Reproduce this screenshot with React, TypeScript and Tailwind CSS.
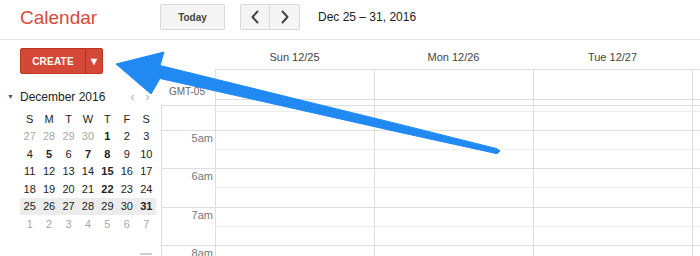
import React from 'react';

type Cell = { d: string; muted?: boolean; bold?: boolean };

const weeks: Cell[][] = [
  [{ d: '27', muted: true }, { d: '28', muted: true }, { d: '29', muted: true }, { d: '30', muted: true }, { d: '1', bold: true }, { d: '2' }, { d: '3' }],
  [{ d: '4' }, { d: '5', bold: true }, { d: '6' }, { d: '7', bold: true }, { d: '8', bold: true }, { d: '9' }, { d: '10' }],
  [{ d: '11' }, { d: '12' }, { d: '13' }, { d: '14' }, { d: '15', bold: true }, { d: '16' }, { d: '17' }],
  [{ d: '18' }, { d: '19' }, { d: '20' }, { d: '21' }, { d: '22', bold: true }, { d: '23' }, { d: '24' }],
  [{ d: '25' }, { d: '26' }, { d: '27' }, { d: '28' }, { d: '29' }, { d: '30' }, { d: '31', bold: true }],
  [{ d: '1', muted: true }, { d: '2', muted: true }, { d: '3', muted: true }, { d: '4', muted: true }, { d: '5', muted: true }, { d: '6', muted: true }, { d: '7', muted: true }],
];

// last column runs off the right edge, its label isn't visible
const dayNames = ['Sun 12/25', 'Mon 12/26', 'Tue 12/27', ''];

// half-hour slots below the grid's top border; hour slots end on a full-width line
const slots: { h: string; hour: boolean; label?: string }[] = [
  { h: 'h-[6px]', hour: false },
  { h: 'h-[19px]', hour: true },
  { h: 'h-[19px]', hour: false, label: '5am' },
  { h: 'h-[19px]', hour: true },
  { h: 'h-[19px]', hour: false, label: '6am' },
  { h: 'h-[20px]', hour: true },
  { h: 'h-[19px]', hour: false, label: '7am' },
  { h: 'h-[19px]', hour: true },
  { h: 'h-[19px]', hour: false, label: '8am' },
];

function Chevron({ dir }: { dir: 'left' | 'right' }) {
  return (
    <svg width="10" height="14" viewBox="0 0 10 14" fill="none">
      <path
        d={dir === 'left' ? 'M7.5 1.5L2.5 7l5 5.5' : 'M2.5 1.5L7.5 7l-5 5.5'}
        stroke="#444"
        strokeWidth="2"
        strokeLinecap="round"
        strokeLinejoin="round"
      />
    </svg>
  );
}

function MiniCalendar() {
  return (
    <div className="mt-[15px]">
      <div className="flex items-center h-[16px]">
        <span className="w-[20px] pl-[7px] text-[7px] text-[#555]">▼</span>
        <span className="text-[12px] text-[#222]">December 2016</span>
        <span className="ml-[25px] text-[12px] text-[#aaa]">‹</span>
        <span className="ml-[11px] text-[12px] text-[#aaa]">›</span>
      </div>
      <div className="ml-[20px] w-[136px] mt-[5px]">
        <div className="grid grid-cols-7 h-[17.5px] items-center text-[11px] text-[#222]">
          {['S', 'M', 'T', 'W', 'T', 'F', 'S'].map((s, i) => (
            <span key={i} className="text-center">{s}</span>
          ))}
        </div>
        {weeks.map((w, i) => (
          <div key={i} className={`grid grid-cols-7 h-[17.5px] items-center text-[11px] ${i === 4 ? 'bg-[#ececec]' : ''}`}>
            {w.map((c, j) => (
              <span
                key={j}
                className={`text-center ${c.muted ? 'text-[#a8a8a8]' : 'text-[#222]'} ${c.bold ? 'font-bold' : ''}`}
              >
                {c.d}
              </span>
            ))}
          </div>
        ))}
      </div>
      <div className="mt-[20px] ml-[140px] w-[12px] h-[2px] bg-[#cfcfcf]" />
    </div>
  );
}

function Arrow() {
  return (
    <svg className="absolute inset-0 pointer-events-none" width="700" height="256" viewBox="0 0 700 256">
      <polygon
        points="116,64 164,52 160,65.5 300,99.9 400,124.4 497,148.7 500,151 497,153.7 400,132.4 300,109.9 160,78.5 151,94"
        fill="#2189f2"
        stroke="#2189f2"
        strokeWidth="1"
        strokeLinejoin="round"
      />
    </svg>
  );
}

export default function App() {
  return (
    <div className="relative w-[700px] h-[256px] overflow-hidden bg-white font-['Liberation_Sans',Arial,sans-serif]">
      <header className="h-[40px] border-b border-[#e5e5e5] flex items-center pb-[5px]">
        <div className="w-[160px] pl-[20px] text-[19px] text-[#d64a3b] leading-none">Calendar</div>
        <button className="w-[65px] h-[26px] rounded-[2px] border border-[#d9d9d9] bg-[#f5f5f5] text-[10px] font-bold text-[#444]">
          Today
        </button>
        <div className="ml-[15px] flex h-[26px] rounded-[2px] border border-[#d9d9d9] bg-[#f5f5f5]">
          <div className="w-[29px] flex items-center justify-center border-r border-[#d9d9d9]">
            <Chevron dir="left" />
          </div>
          <div className="w-[29px] flex items-center justify-center">
            <Chevron dir="right" />
          </div>
        </div>
        <div className="ml-[18px] text-[12px] text-[#222]">Dec 25 – 31, 2016</div>
      </header>

      <div className="flex">
        <aside className="w-[161px] shrink-0">
          <div className="ml-[20px] mt-[8px] flex w-[83px] h-[26px] rounded-[2px] bg-[#d34836] border border-[#c23321] text-white">
            <div className="w-[64px] flex items-center justify-center text-[10px] font-bold tracking-[0.2px]">CREATE</div>
            <div className="flex-1 flex items-center justify-center border-l border-[#b52d1c] text-[11px]">▼</div>
          </div>
          <MiniCalendar />
        </aside>

        <main className="flex-1 min-w-0">
          <div className="flex h-[29px]">
            <div className="w-[54px] shrink-0" />
            {dayNames.map((n, i) => (
              <div key={i} className="w-[159px] shrink-0 flex items-end justify-center pb-[4px] text-[11px] text-[#444]">
                {n}
              </div>
            ))}
          </div>

          <div className="flex h-[36px]">
            <div className="w-[54px] shrink-0 flex items-end justify-end pr-[10px] pb-[6px] text-[10px] text-[#666]">
              GMT-05
            </div>
            <div className="flex flex-col">
              <div className="flex h-[31px] border-y border-[#dedede]">
                {dayNames.map((n, i) => (
                  <div key={i} className="w-[159px] shrink-0 border-l border-[#dedede]" />
                ))}
              </div>
              <div className="flex h-[5px]">
                {dayNames.map((n, i) => (
                  <div key={i} className="w-[159px] shrink-0 border-l border-[#dedede]" />
                ))}
              </div>
            </div>
          </div>

          <div className="border-t border-[#dedede]">
            {slots.map((s, i) => (
              <div key={i} className={`flex ${s.h}`}>
                <div
                  className={`w-[54px] shrink-0 border-l border-[#dedede] text-right pr-[2px] text-[11px] text-[#777] leading-[13px] pt-[1px] ${
                    s.hour ? 'border-b' : ''
                  }`}
                >
                  {s.label}
                </div>
                {dayNames.map((n, j) => (
                  <div
                    key={j}
                    className={`w-[159px] shrink-0 border-l border-b ${s.hour ? 'border-[#dedede]' : 'border-l-[#dedede] border-b-[#efefef]'}`}
                  />
                ))}
              </div>
            ))}
          </div>
        </main>
      </div>

      <Arrow />
    </div>
  );
}
